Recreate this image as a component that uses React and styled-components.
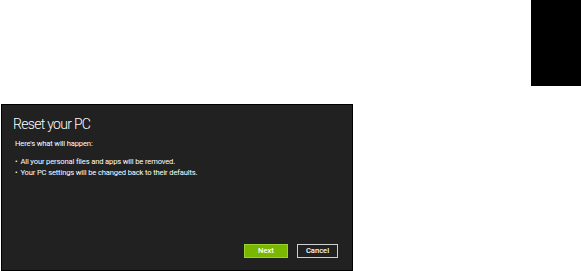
import React from "react";
import styled, { createGlobalStyle } from "styled-components";

const GlobalStyle = createGlobalStyle`
  html, body {
    margin: 0;
    padding: 0;
    background: #fff;
  }
`;

const Page = styled.div`
  display: flex;
  width: 581px;
  height: 271px;
  overflow: hidden;
`;

const LeftCol = styled.div`
  padding: 104px 0 0 1px;
`;

const Dialog = styled.div`
  box-sizing: border-box;
  width: 352px;
  height: 167px;
  background: #212121;
  border: 1px solid #000;
  padding: 9px 11px 0 11px;
  display: flex;
  flex-direction: column;
  font-family: Roboto, "Liberation Sans", sans-serif;
  color: #fff;
`;

const Title = styled.h1`
  margin: 0;
  font-size: 14px;
  font-weight: 300;
  line-height: 20px;
  letter-spacing: -0.7px;
`;

const Lead = styled.p`
  margin: 4px 0 7px 2px;
  font-size: 7.6px;
  line-height: 11px;
  letter-spacing: -0.15px;
`;

const List = styled.ul`
  margin: 0;
  padding: 0 0 0 2px;
  list-style: none;
`;

const Item = styled.li`
  font-size: 7.6px;
  line-height: 11px;
  letter-spacing: -0.15px;
  &::before {
    content: "•";
    margin-right: 3px;
  }
`;

const Actions = styled.div`
  margin-top: auto;
  display: flex;
  justify-content: flex-end;
  gap: 9px;
  padding: 0 3px 12px 0;
`;

const Button = styled.button`
  box-sizing: border-box;
  width: ${(p) => (p.$primary ? "44px" : "41px")};
  height: 14px;
  padding: 0;
  border: 1px solid ${(p) => (p.$primary ? "#9ad230" : "#d0d0d0")};
  background: ${(p) => (p.$primary ? "#7ab800" : "#212121")};
  color: #fff;
  font-family: Roboto, "Liberation Sans", sans-serif;
  font-size: 7.6px;
  font-weight: 500;
  line-height: 12px;
`;

const Tab = styled.div`
  margin-left: auto;
  width: 50px;
  height: 86px;
  background: #000;
`;

export default function App() {
  return (
    <>
      <GlobalStyle />
      <Page>
        <LeftCol>
          <Dialog>
            <Title>Reset your PC</Title>
            <Lead>Here's what will happen:</Lead>
            <List>
              <Item>All your personal files and apps will be removed.</Item>
              <Item>Your PC settings will be changed back to their defaults.</Item>
            </List>
            <Actions>
              <Button $primary>Next</Button>
              <Button>Cancel</Button>
            </Actions>
          </Dialog>
        </LeftCol>
        <Tab />
      </Page>
    </>
  );
}
